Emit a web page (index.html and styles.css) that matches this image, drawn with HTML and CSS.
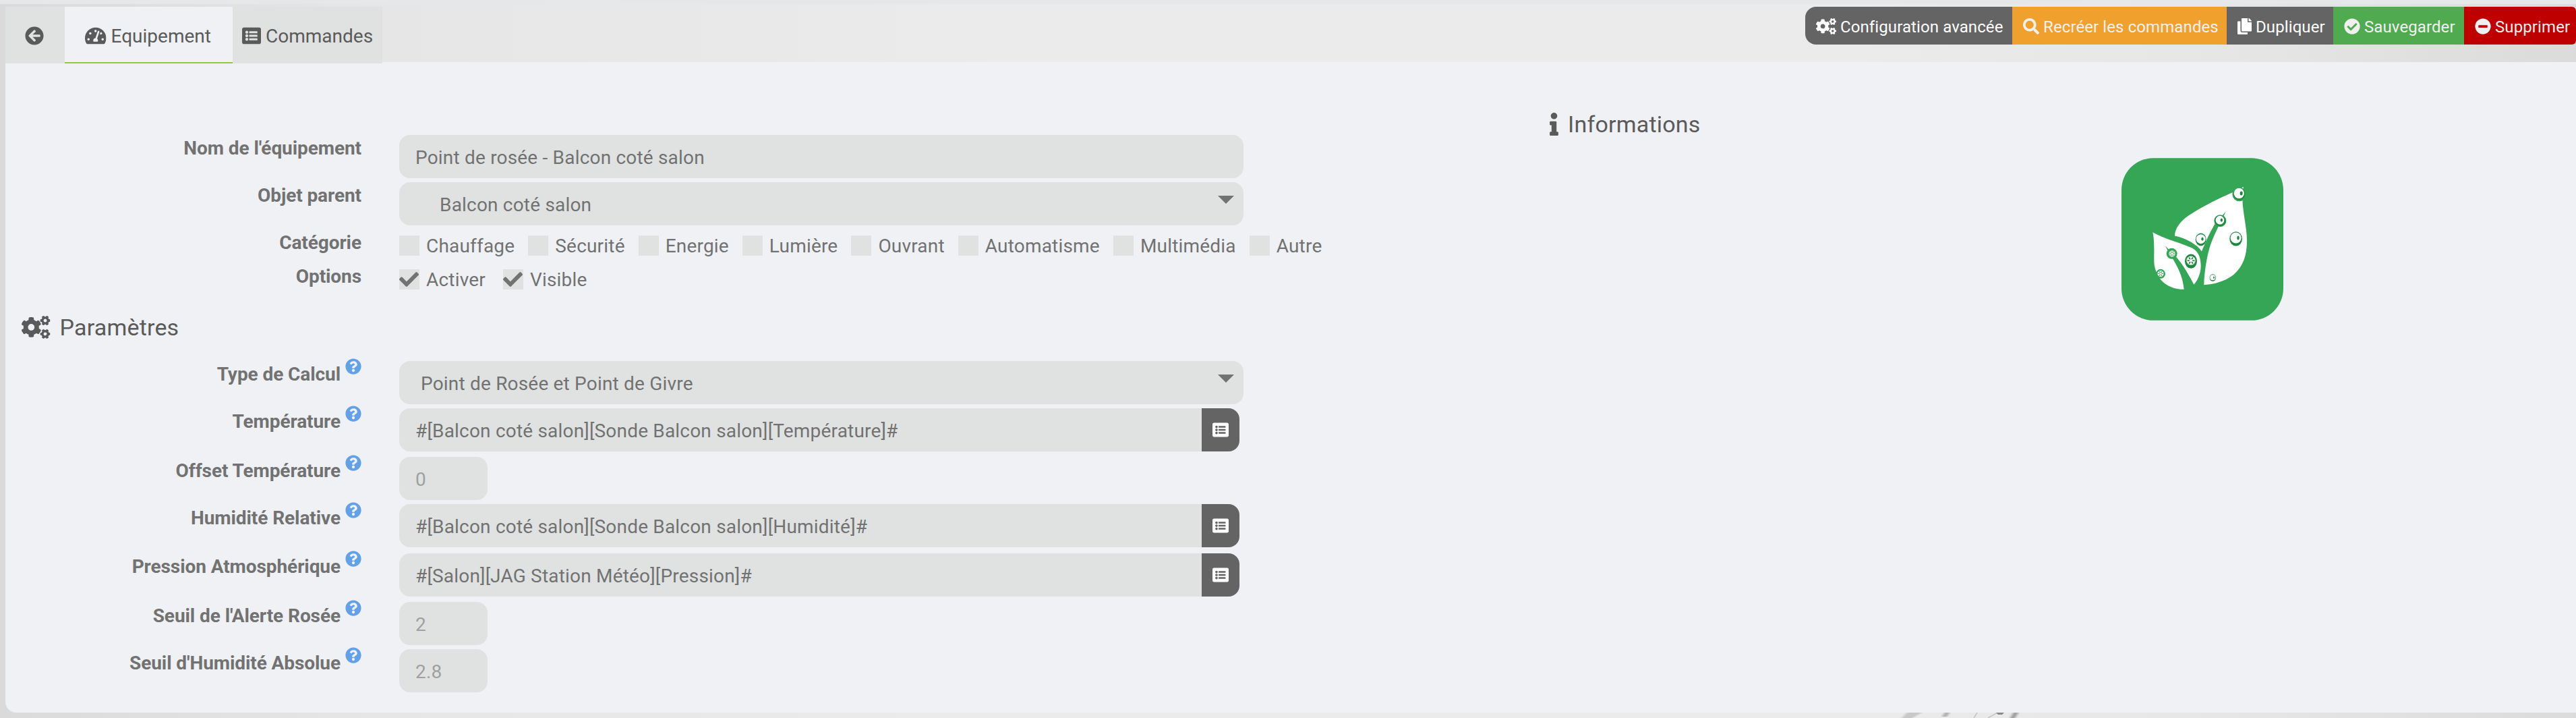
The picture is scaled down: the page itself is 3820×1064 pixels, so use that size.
FILE: index.html
```html
<!DOCTYPE html>
<html lang="fr">
<head>
<meta charset="utf-8">
<title>Point de rosée - Equipement</title>
<link rel="stylesheet" href="styles.css">
</head>
<body>
<svg class="sprite" aria-hidden="true">
  <symbol id="arrow-left" viewBox="0 0 512 512"><path d="M256 504C119 504 8 393 8 256S119 8 256 8s248 111 248 248-111 248-248 248zm28.9-143.6L209.4 288H392c13.3 0 24-10.7 24-24v-16c0-13.3-10.7-24-24-24H209.4l75.5-72.4c9.7-9.3 9.9-24.8.4-34.3l-11-10.9c-9.4-9.4-24.6-9.4-33.9 0L107.7 239c-9.4 9.4-9.4 24.6 0 33.9l132.7 132.7c9.4 9.4 24.6 9.4 33.9 0l11-10.9c9.5-9.5 9.3-25-.4-34.3z"/></symbol>
  <symbol id="tachometer" viewBox="0 0 576 512"><path d="M288 32C128.94 32 0 160.94 0 320c0 52.8 14.25 102.26 39.06 144.8 5.61 9.62 16.3 15.2 27.44 15.2h443c11.14 0 21.83-5.58 27.44-15.2C561.75 422.26 576 372.8 576 320c0-159.06-128.94-288-288-288zm0 64c14.71 0 26.58 10.13 30.32 23.65-1.11 2.26-2.64 4.23-3.45 6.67l-9.22 27.67c-5.13 3.49-10.97 6.01-17.64 6.01-17.67 0-32-14.33-32-32S270.33 96 288 96zM96 384c-17.67 0-32-14.33-32-32s14.33-32 32-32 32 14.33 32 32-14.33 32-32 32zm48-160c-17.67 0-32-14.33-32-32s14.33-32 32-32 32 14.33 32 32-14.33 32-32 32zm246.77-72.41l-61.33 184C343.13 347.33 352 364.54 352 384c0 11.72-3.38 22.55-8.88 32H232.88c-5.5-9.45-8.88-20.28-8.88-32 0-33.94 26.5-61.43 59.9-63.59l61.34-184.01c4.17-12.56 17.73-19.45 30.36-15.17 12.57 4.19 19.35 17.79 15.17 30.36zm14.66 57.2l15.52-46.55c3.47-1.29 7.13-2.23 11.05-2.23 17.67 0 32 14.33 32 32s-14.33 32-32 32c-11.38-.01-20.89-6.28-26.57-15.22zM480 384c-17.67 0-32-14.33-32-32s14.33-32 32-32 32 14.33 32 32-14.33 32-32 32z"/></symbol>
  <symbol id="list-alt" viewBox="0 0 512 512"><path d="M464 480H48c-26.51 0-48-21.49-48-48V80c0-26.51 21.49-48 48-48h416c26.51 0 48 21.49 48 48v352c0 26.51-21.49 48-48 48zM128 120c-22.091 0-40 17.909-40 40s17.909 40 40 40 40-17.909 40-40-17.909-40-40-40zm0 96c-22.091 0-40 17.909-40 40s17.909 40 40 40 40-17.909 40-40-17.909-40-40-40zm0 96c-22.091 0-40 17.909-40 40s17.909 40 40 40 40-17.909 40-40-17.909-40-40-40zm288-136v-32c0-6.627-5.373-12-12-12H204c-6.627 0-12 5.373-12 12v32c0 6.627 5.373 12 12 12h200c6.627 0 12-5.373 12-12zm0 96v-32c0-6.627-5.373-12-12-12H204c-6.627 0-12 5.373-12 12v32c0 6.627 5.373 12 12 12h200c6.627 0 12-5.373 12-12zm0 96v-32c0-6.627-5.373-12-12-12H204c-6.627 0-12 5.373-12 12v32c0 6.627 5.373 12 12 12h200c6.627 0 12-5.373 12-12z"/></symbol>
  <symbol id="cogs" viewBox="0 0 640 512">
    <path id="cog-small" d="M512.1 191l-8.2 14.3c-3 5.3-9.4 7.5-15.1 5.4-11.8-4.4-22.6-10.7-32.1-18.6-4.6-3.8-5.8-10.5-2.8-15.7l8.2-14.3c-6.9-8-12.3-17.3-15.9-27.4h-16.5c-6 0-11.2-4.3-12.2-10.3-2-12-2.1-24.6 0-37.1 1-6 6.2-10.4 12.2-10.4h16.5c3.6-10.1 9-19.4 15.9-27.4l-8.2-14.3c-3-5.2-1.9-11.9 2.8-15.7 9.5-7.9 20.4-14.2 32.1-18.6 5.7-2.1 12.1.1 15.1 5.4l8.2 14.3c10.5-1.9 21.2-1.9 31.7 0L552 6.3c3-5.3 9.4-7.5 15.1-5.4 11.8 4.4 22.6 10.7 32.1 18.6 4.6 3.8 5.8 10.5 2.8 15.7l-8.2 14.3c6.9 8 12.3 17.3 15.9 27.4h16.5c6 0 11.2 4.3 12.2 10.3 2 12 2.1 24.6 0 37.1-1 6-6.2 10.4-12.2 10.4h-16.5c-3.6 10.1-9 19.4-15.9 27.4l8.2 14.3c3 5.2 1.9 11.9-2.8 15.7-9.5 7.9-20.4 14.2-32.1 18.6-5.7 2.1-12.1-.1-15.1-5.4l-8.2-14.3c-10.4 1.9-21.2 1.9-31.7 0zm-10.5-58.8c38.5 29.6 82.4-14.3 52.8-52.8-38.5-29.7-82.4 14.3-52.8 52.8z"/>
    <use href="#cog-small" y="298.9"/>
    <path d="M386.3 286.1l33.7 16.8c10.1 5.8 14.5 18.1 10.5 29.1-8.9 24.2-26.4 46.4-42.6 65.8-7.4 8.9-20.2 11.1-30.3 5.3l-29.1-16.8c-16 13.7-34.6 24.6-54.9 31.7v33.6c0 11.6-8.3 21.6-19.7 23.6-24.6 4.2-50.4 4.4-75.9 0-11.5-2-20-11.9-20-23.6V418c-20.3-7.2-38.9-18-54.9-31.7L74 403c-10 5.8-22.9 3.6-30.3-5.3-16.2-19.4-33.3-41.6-42.2-65.7-4-10.9.4-23.2 10.5-29.1l33.3-16.8c-3.9-20.9-3.9-42.4 0-63.4L12 205.8c-10.1-5.8-14.6-18.1-10.5-29 8.9-24.2 26-46.4 42.2-65.8 7.4-8.9 20.2-11.1 30.3-5.3l29.1 16.8c16-13.7 34.6-24.6 54.9-31.7V57.1c0-11.5 8.2-21.5 19.6-23.5 24.6-4.2 50.5-4.4 76-.1 11.5 2 20 11.9 20 23.6v33.6c20.3 7.2 38.9 18 54.9 31.7l29.1-16.8c10-5.8 22.9-3.6 30.3 5.3 16.2 19.4 33.2 41.6 42.1 65.8 4 10.9.1 23.2-10 29.1l-33.7 16.8c3.9 21 3.9 42.5 0 63.5zm-117.6 21.1c59.2-77-28.7-164.9-105.7-105.7-59.2 77 28.7 164.9 105.7 105.7z"/>
  </symbol>
  <symbol id="search" viewBox="0 0 512 512"><path d="M505 442.7L405.3 343c-4.5-4.5-10.6-7-17-7H372c27.6-35.3 44-79.7 44-128C416 93.1 322.9 0 208 0S0 93.1 0 208s93.1 208 208 208c48.3 0 92.7-16.4 128-44v16.3c0 6.4 2.5 12.5 7 17l99.7 99.7c9.4 9.4 24.6 9.4 33.9 0l28.3-28.3c9.4-9.4 9.4-24.6.1-34zM208 336c-70.7 0-128-57.2-128-128 0-70.7 57.2-128 128-128 70.7 0 128 57.2 128 128 0 70.7-57.2 128-128 128z"/></symbol>
  <symbol id="copy" viewBox="0 0 448 512"><path d="M320 448v40c0 13.255-10.745 24-24 24H24c-13.255 0-24-10.745-24-24V120c0-13.255 10.745-24 24-24h72v296c0 30.879 25.121 56 56 56h168zm0-344V0H152c-13.255 0-24 10.745-24 24v368c0 13.255 10.745 24 24 24h272c13.255 0 24-10.745 24-24V128H344c-13.2 0-24-10.8-24-24zm120.971-31.029L375.029 7.029A24 24 0 0 0 358.059 0H352v96h96v-6.059a24 24 0 0 0-7.029-16.97z"/></symbol>
  <symbol id="check-circle" viewBox="0 0 512 512"><path d="M504 256c0 136.967-111.033 248-248 248S8 392.967 8 256 119.033 8 256 8s248 111.033 248 248zM227.314 387.314l184-184c6.248-6.248 6.248-16.379 0-22.627l-22.627-22.627c-6.248-6.249-16.379-6.249-22.628 0L216 308.118l-70.059-70.059c-6.248-6.248-16.379-6.248-22.628 0l-22.627 22.627c-6.248 6.248-6.248 16.379 0 22.627l104 104c6.249 6.249 16.379 6.249 22.628.001z"/></symbol>
  <symbol id="minus-circle" viewBox="0 0 512 512"><path d="M256 8C119 8 8 119 8 256s111 248 248 248 248-111 248-248S393 8 256 8zM124 296c-6.600 0-12-5.400-12-12v-56c0-6.600 5.400-12 12-12h264c6.600 0 12 5.400 12 12v56c0 6.600-5.400 12-12 12H124z"/></symbol>
  <symbol id="info" viewBox="0 0 192 512"><path d="M20 424.229h20V279.771H20c-11.046 0-20-8.954-20-20V212c0-11.046 8.954-20 20-20h112c11.046 0 20 8.954 20 20v212.229h20c11.046 0 20 8.954 20 20V492c0 11.046-8.954 20-20 20H20c-11.046 0-20-8.954-20-20v-47.771c0-11.046 8.954-20 20-20zM96 0C56.235 0 24 32.235 24 72s32.235 72 72 72 72-32.235 72-72S135.764 0 96 0z"/></symbol>
  <symbol id="question" viewBox="0 0 512 512"><path d="M504 256c0 136.997-111.043 248-248 248S8 392.997 8 256C8 119.083 119.043 8 256 8s248 111.083 248 248zM262.655 90c-54.497 0-89.255 22.957-116.549 63.758-3.536 5.286-2.353 12.415 2.715 16.258l34.699 26.31c5.205 3.947 12.621 3.008 16.665-2.122 17.864-22.658 30.113-35.797 57.303-35.797 20.429 0 45.698 13.148 45.698 32.958 0 14.976-12.363 22.667-32.534 33.976C247.128 238.528 216 254.941 216 296v4c0 6.627 5.373 12 12 12h56c6.627 0 12-5.373 12-12v-1.333c0-28.462 83.186-29.647 83.186-106.667 0-58.002-60.165-102-116.531-102zM256 338c-25.365 0-46 20.635-46 46 0 25.364 20.635 46 46 46s46-20.636 46-46c0-25.365-20.635-46-46-46z"/></symbol>
  <symbol id="check" viewBox="0 0 512 512"><path d="M173.898 439.404l-166.400-166.400c-9.997-9.997-9.997-26.206 0-36.204l36.203-36.204c9.997-9.998 26.207-9.998 36.204 0L192 312.690 432.095 72.596c9.997-9.997 26.207-9.997 36.204 0l36.203 36.204c9.997 9.997 9.997 26.206 0 36.204l-294.400 294.401c-9.998 9.997-26.207 9.997-36.204-.001z"/></symbol>
  <symbol id="flake" viewBox="-10 -10 20 20"><g fill="none" stroke="#fff" stroke-width="1.900"><path id="flake-arm" d="M0-9V9M-3.500-8L0-5 3.500-8M-3.500 8L0 5 3.500 8"/><use href="#flake-arm" transform="rotate(60)"/><use href="#flake-arm" transform="rotate(120)"/></g></symbol>
</svg>

<div class="topstrip"></div>
<div class="page">
  <header class="header">
    <nav class="tabs">
      <a class="tab tab--back"><svg class="ico"><use href="#arrow-left"/></svg></a>
      <a class="tab tab--active"><svg class="ico ico--tacho"><use href="#tachometer"/></svg>Equipement</a>
      <a class="tab tab--cmd"><svg class="ico"><use href="#list-alt"/></svg>Commandes</a>
    </nav>
    <div class="actions">
      <a class="btn btn--config"><svg class="bico bico--cogs"><use href="#cogs"/></svg>Configuration avancée</a>
      <a class="btn btn--warning"><svg class="bico"><use href="#search"/></svg>Recréer les commandes</a>
      <a class="btn btn--copy"><svg class="bico bico--copy"><use href="#copy"/></svg>Dupliquer</a>
      <a class="btn btn--success"><svg class="bico"><use href="#check-circle"/></svg>Sauvegarder</a>
      <a class="btn btn--danger"><svg class="bico"><use href="#minus-circle"/></svg>Supprimer</a>
    </div>
  </header>

  <main class="panel">
    <section class="form">
      <div class="row">
        <div class="label">Nom de l'équipement</div>
        <div class="input">Point de rosée - Balcon coté salon</div>
      </div>
      <div class="row">
        <div class="label">Objet parent</div>
        <div class="input input--select input--nested">Balcon coté salon<i class="caret"></i></div>
      </div>
      <div class="row row--checks">
        <div class="label">Catégorie</div>
        <div class="checks">
          <div class="check"><i class="box"></i>Chauffage</div>
          <div class="check"><i class="box"></i>Sécurité</div>
          <div class="check"><i class="box"></i>Energie</div>
          <div class="check"><i class="box"></i>Lumière</div>
          <div class="check"><i class="box"></i>Ouvrant</div>
          <div class="check"><i class="box"></i>Automatisme</div>
          <div class="check"><i class="box"></i>Multimédia</div>
          <div class="check"><i class="box"></i>Autre</div>
        </div>
      </div>
      <div class="row row--checks">
        <div class="label">Options</div>
        <div class="checks checks--options">
          <div class="check"><i class="box"><svg class="tick"><use href="#check"/></svg></i>Activer</div>
          <div class="check"><i class="box"><svg class="tick"><use href="#check"/></svg></i>Visible</div>
        </div>
      </div>

      <h2 class="legend legend--params"><svg class="lico lico--cogs"><use href="#cogs"/></svg>Paramètres</h2>

      <div class="row">
        <div class="label">Type de Calcul<svg class="help"><use href="#question"/></svg></div>
        <div class="input input--select">Point de Rosée et Point de Givre<i class="caret"></i></div>
      </div>
      <div class="row row--72">
        <div class="label">Température<svg class="help"><use href="#question"/></svg></div>
        <div class="group"><div class="input input--group">#[Balcon coté salon][Sonde Balcon salon][Température]#</div><a class="pick"><svg class="pico"><use href="#list-alt"/></svg></a></div>
      </div>
      <div class="row row--low">
        <div class="label">Offset Température<svg class="help"><use href="#question"/></svg></div>
        <div class="input input--small">0</div>
      </div>
      <div class="row row--low row--73">
        <div class="label">Humidité Relative<svg class="help"><use href="#question"/></svg></div>
        <div class="group"><div class="input input--group">#[Balcon coté salon][Sonde Balcon salon][Humidité]#</div><a class="pick"><svg class="pico"><use href="#list-alt"/></svg></a></div>
      </div>
      <div class="row row--72">
        <div class="label">Pression Atmosphérique<svg class="help"><use href="#question"/></svg></div>
        <div class="group"><div class="input input--group">#[Salon][JAG Station Météo][Pression]#</div><a class="pick"><svg class="pico"><use href="#list-alt"/></svg></a></div>
      </div>
      <div class="row row--low">
        <div class="label">Seuil de l'Alerte Rosée<svg class="help"><use href="#question"/></svg></div>
        <div class="input input--small">2</div>
      </div>
      <div class="row row--low">
        <div class="label">Seuil d'Humidité Absolue<svg class="help"><use href="#question"/></svg></div>
        <div class="input input--small">2.8</div>
      </div>
    </section>

    <aside class="aside">
      <h2 class="legend legend--info"><svg class="lico lico--info"><use href="#info"/></svg>Informations</h2>
      <svg class="logo" viewBox="48 42 720 722">
        <rect x="48" y="42" width="720" height="722" rx="142" fill="#35a556"/>
        <g fill="#fff">
          <path d="M590 170C560 192 512 206 470 228C420 253 375 278 345 299C308 325 285 357 285 388C335 398 382 425 405 457C420 420 444 365 470 325L512 281C495 318 465 370 445 425C428 475 416 550 415 606C460 604 510 590 548 560C590 522 606 475 606 410C606 350 588 290 586 226Z"/>
          <path d="M187 372C240 402 310 418 362 442C393 458 401 490 401 522C401 550 391 580 370 605C345 556 315 505 280 470L243 433C255 460 272 480 285 505C305 540 322 580 326 626C285 626 248 612 222 582C203 555 193 530 193 500C193 455 195 410 187 372Z"/>
        </g>
        <g fill="#35a556"><circle cx="572" cy="203" r="31"/><circle cx="487" cy="321" r="27"/><circle cx="222" cy="557" r="21"/><circle cx="272" cy="467" r="24"/></g>
        <g fill="#1d863f"><ellipse cx="401" cy="404" rx="24" ry="28"/><ellipse cx="557" cy="401" rx="28" ry="32"/><ellipse cx="357" cy="501" rx="27" ry="32"/><ellipse cx="454" cy="574" rx="14" ry="16"/><circle cx="487" cy="321" r="24"/><circle cx="572" cy="202" r="26"/></g>
        <g fill="#fff"><circle cx="571" cy="199" r="23"/><circle cx="486" cy="318" r="19"/><circle cx="401" cy="402" r="21"/><circle cx="557" cy="397" r="24"/><circle cx="454" cy="573" r="12"/></g>
        <g fill="#1d863f"><ellipse cx="581" cy="199" rx="6" ry="9"/><ellipse cx="493" cy="318" rx="5" ry="8"/><ellipse cx="408" cy="402" rx="5" ry="8"/><ellipse cx="567" cy="397" rx="5" ry="9"/><ellipse cx="459" cy="573" rx="3" ry="5"/></g>
        <use href="#flake" x="334" y="475" width="46" height="46"/>
        <use href="#flake" x="257" y="451" width="32" height="32"/>
        <use href="#flake" x="206" y="540" width="32" height="32"/>
      </svg>
    </aside>
  </main>
  <svg class="marble" viewBox="0 0 400 8">
    <defs><filter id="soft"><feGaussianBlur stdDeviation="2 .5"/></filter></defs>
    <path d="M128 0h22l-14 8h-16z" fill="#c8c8c8" filter="url(#soft)"/>
    <path d="M184 0h7l-4 6h-7z" fill="#aaa" filter="url(#soft)"/>
    <path d="M232 0l-5 8M262 0l-14 8" stroke="#c4c4c4" stroke-width="1.500"/>
    <path d="M260 0h12l-3 3-6 0z" fill="#888"/>
    <path d="M286 0h7l-5 8h-7z" fill="#999" filter="url(#soft)"/>
  </svg>
</div>
</body>
</html>
```
FILE: styles.css
```css
* { box-sizing: border-box; }

body {
  margin: 0;
  width: 3820px;
  height: 1064px;
  overflow: hidden;
  background: #e9e9e9;
  color: #727272;
  font: 28px/1 Roboto, sans-serif;
}

svg { fill: currentColor; display: block; flex: none; }
.sprite { position: absolute; width: 0; height: 0; }

.topstrip { height: 6px; background: #e6e7e9; }

.page {
  height: 1058px;
  padding-left: 8px;
  background: linear-gradient(90deg, #dadada 0, #e6e6e6 560px, #ebebeb 1500px, #ebebeb 2750px, #e6e6e6 3300px, #dbdbdb 3820px);
}

/* Header */
.header { display: flex; justify-content: space-between; height: 86px; padding-top: 4px; }
.tabs { display: flex; height: 84px; color: #5a5a5a; }
.tab {
  display: flex;
  align-items: center;
  height: 84px;
  padding-top: 4px;
  background: #dfe2e1;
}
.tab--back { width: 88px; padding-left: 29px; }
.tab--active { width: 249px; padding-left: 30px; padding-top: 6px; gap: 7px; background: #eff1f4; border-bottom: 2px solid #94c936; }
.tab--cmd { width: 222px; padding-left: 14px; gap: 7px; }
.ico { width: 28px; height: 28px; margin-top: -3px; }
.ico--tacho { width: 31.5px; }

.actions { display: flex; height: 56px; width: 1143px; color: #fff; font-size: 24px; letter-spacing: .1px; border-radius: 16px 6px 6px 16px; overflow: hidden; }
.btn { display: flex; flex: none; align-items: center; gap: 6px; padding: 4px 0 0 16px; white-space: nowrap; }
.bico { width: 24px; height: 24px; margin-top: -2px; }
.bico--cogs { width: 30px; }
.bico--copy { width: 21px; }
.btn--config { width: 307px; background: #646464; }
.btn--warning { width: 318px; background: #f0a02c; color: #f0f0f0; }
.btn--copy { width: 158px; background: #646464; }
.btn--success { width: 194px; background: #50ab50; color: #f0f0f0; }
.btn--danger { width: 168px; background: #be0000; color: #f0f0f0; }

/* Panel */
.panel { display: flex; height: 964px; background: #eff1f4; border-radius: 0 0 0 16px; }
.form { width: 2290px; padding-top: 108px; }

.row { display: flex; height: 70px; }
.row--checks { height: 50px; }
.row--72 { height: 72px; }
.row--73 { height: 73px; }

.label {
  display: flex;
  justify-content: flex-end;
  width: 528px;
  margin-right: 56px;
  font-weight: 700;
  letter-spacing: -.08px;
  line-height: 40px;
  white-space: nowrap;
}
.row--low .label { padding-top: 1px; }
.help { width: 24px; height: 24px; margin: -4px 0 0 7px; color: #62a1e8; }

.input {
  position: relative;
  width: 1252px;
  height: 64px;
  padding-left: 24px;
  border-radius: 16px;
  background: #dfe2e1;
  letter-spacing: .19px;
  line-height: 67px;
  white-space: nowrap;
}
.input--select { padding-left: 32px; }
.input--nested { padding-left: 60px; }
.input--small { width: 131px; color: #a0a0a0; }
.input--group { width: 1190px; border-radius: 16px 0 0 16px; }

.caret {
  position: absolute;
  right: 14px;
  top: 20px;
  border: 12px solid transparent;
  border-top-color: #727272;
  border-bottom-width: 0;
}

.group { display: flex; }
.pick { display: flex; align-items: center; justify-content: center; width: 56px; height: 64px; background: #646464; color: #fff; border-radius: 0 16px 16px 0; }
.pico { width: 24px; height: 24px; }

.checks { display: flex; gap: 20px; padding-top: 9px; letter-spacing: .19px; line-height: 31px; }
.checks--options { gap: 26px; }
.check { display: flex; gap: 10px; height: 30px; }
.box { width: 30px; height: 30px; background: #dfe2e1; }
.tick { width: 29px; height: 30px; }

/* Section titles */
.legend { display: flex; align-items: center; margin: 0; color: #5a5a5a; font-size: 34px; font-weight: 400; letter-spacing: .2px; line-height: 40px; }
.legend--params { height: 40px; margin: 25px 0 30px; padding-left: 24px; gap: 14px; }
.legend--info { height: 40px; }
.lico { height: 34px; }
.lico--cogs { width: 42.5px; }
.lico--info { width: 13px; margin-right: 14px; }

.aside { padding-top: 72px; }
.logo { width: 240px; height: 241px; margin: 30px 0 0 848px; }

.marble { width: 400px; height: 8px; margin-left: 2692px; }
```
